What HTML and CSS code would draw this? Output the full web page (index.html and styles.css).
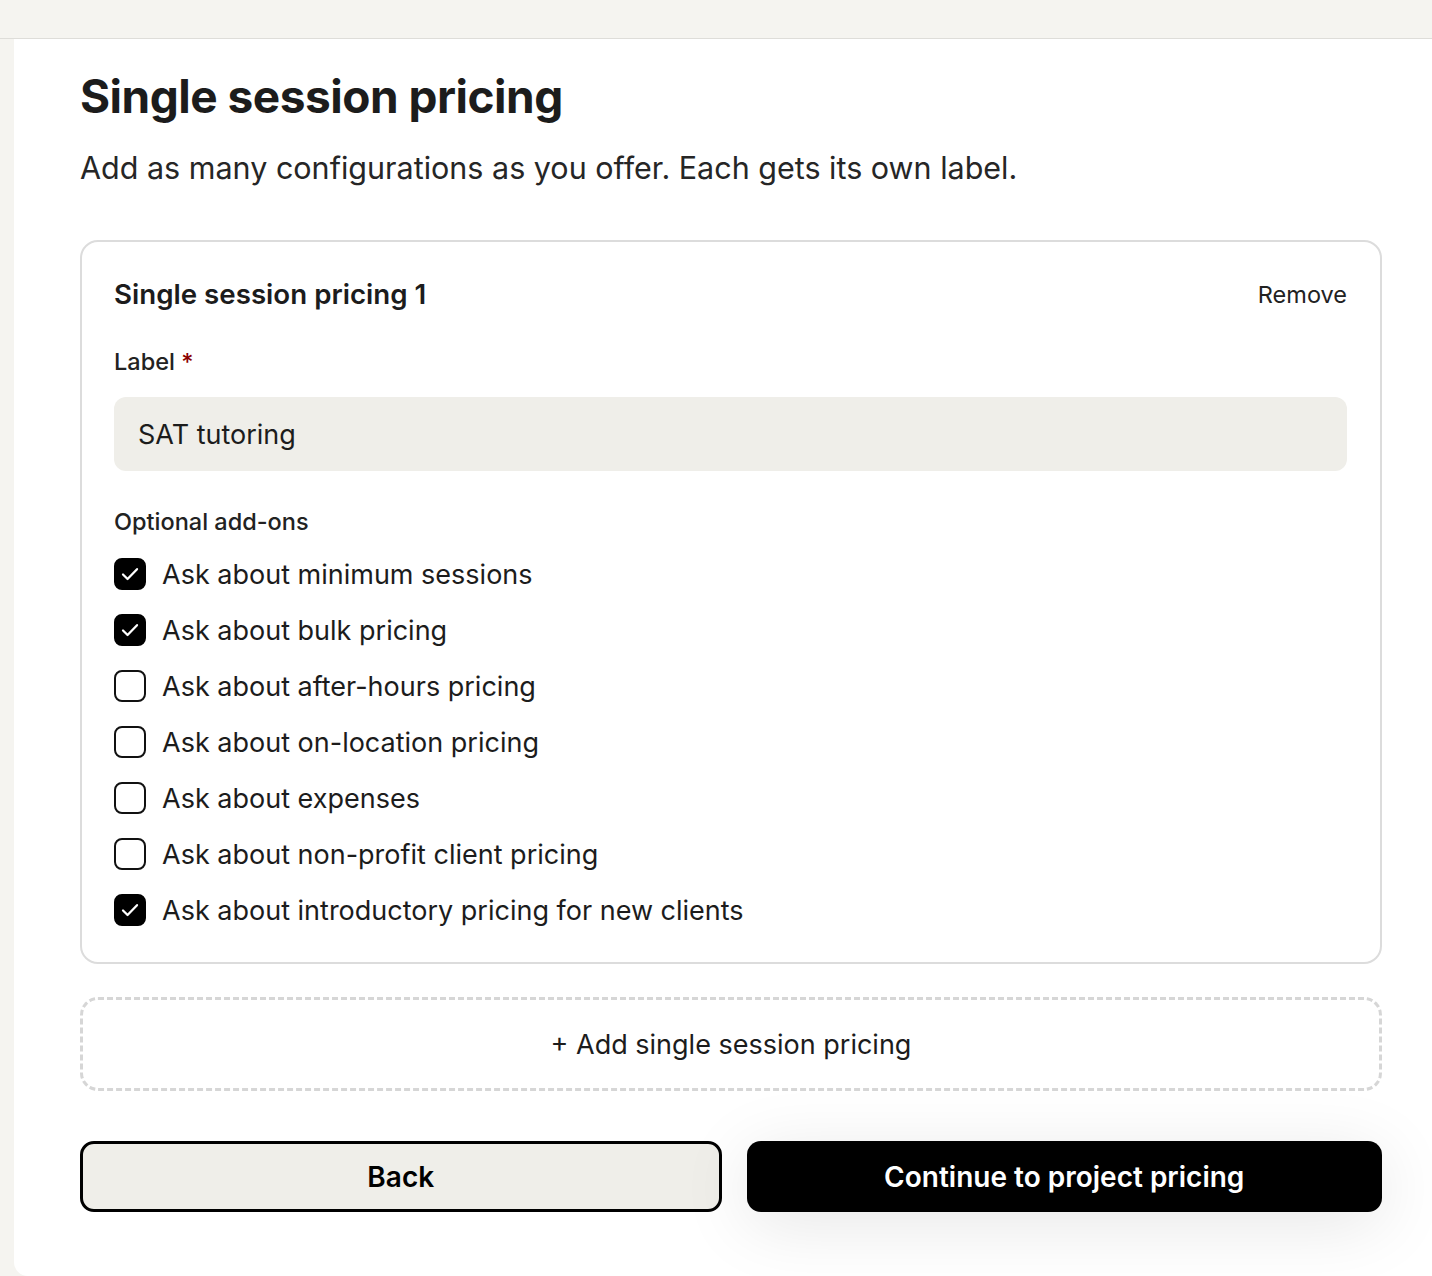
FILE: index.html
```html
<!DOCTYPE html>
<html lang="en">
<head>
  <meta charset="UTF-8" />
  <meta name="viewport" content="width=device-width, initial-scale=1.0"/>
  <title>Single session pricing</title>
  <link rel="stylesheet" href="styles.css">
</head>
<body>
  <div class="topbar"></div>
  <div class="page">
    <div class="panel">
      <h1 class="heading">Single session pricing</h1>
      <p class="intro">Add as many configurations as you offer. Each gets its own label.</p>

      <div class="card">
        <div class="card-head">
          <div class="card-title">Single session pricing 1</div>
          <button class="remove">Remove</button>
        </div>

        <label class="field-label" for="label1">Label <span class="req">*</span></label>
        <input class="field" id="label1" type="text" value="SAT tutoring">

        <div class="field-label addons-label">Optional add-ons</div>
        <div class="addons">
          <label class="addon"><span class="box checked"><svg viewBox="0 0 32 32"><path d="M8 16.5l5.2 5.2L24 10.5" /></svg></span>Ask about minimum sessions</label>
          <label class="addon"><span class="box checked"><svg viewBox="0 0 32 32"><path d="M8 16.5l5.2 5.2L24 10.5" /></svg></span>Ask about bulk pricing</label>
          <label class="addon"><span class="box"></span>Ask about after-hours pricing</label>
          <label class="addon"><span class="box"></span>Ask about on-location pricing</label>
          <label class="addon"><span class="box"></span>Ask about expenses</label>
          <label class="addon"><span class="box"></span>Ask about non-profit client pricing</label>
          <label class="addon"><span class="box checked"><svg viewBox="0 0 32 32"><path d="M8 16.5l5.2 5.2L24 10.5" /></svg></span>Ask about introductory pricing for new clients</label>
        </div>
      </div>

      <button class="add">+ Add single session pricing</button>

      <div class="actions">
        <button class="back">Back</button>
        <button class="continue">Continue to project pricing</button>
      </div>
    </div>
  </div>
</body>
</html>
```

FILE: styles.css
```css
* {
  box-sizing: border-box;
}

body {
  margin: 0;
  background-color: #f5f4f0;
  font-family: Inter, "Noto Sans", sans-serif;
  color: #1c1c1c;
}

.topbar {
  height: 39px;
  border-bottom: 1px solid #deddd9;
}

.page {
  padding-left: 14px;
}

.panel {
  background-color: white;
  border-bottom-left-radius: 14px;
  padding: 29px 50px 64px 66px;
  min-height: 1237px;
}

.heading {
  margin: 0;
  font-size: 46px;
  font-weight: 700;
  letter-spacing: -0.5px;
  line-height: 56px;
}

.intro {
  margin: 24px 0 0;
  font-size: 30.5px;
  line-height: 40px;
  color: #262626;
}

.card {
  margin-top: 52px;
  border: 2px solid #dcdcdc;
  border-radius: 18px;
  padding: 32px 33px 24px 32px;
}

.card-head {
  display: flex;
  justify-content: space-between;
  align-items: center;
  height: 40px;
}

.card-title {
  font-size: 27.7px;
  font-weight: 600;
}

.remove {
  border: none;
  background: none;
  padding: 0;
  font-family: inherit;
  font-size: 23.5px;
  color: #222;
}

.field-label {
  display: block;
  margin-top: 34px;
  font-size: 23.5px;
  line-height: 28px;
  font-weight: 500;
  color: #222;
}

.req {
  color: #8b0000;
}

.field {
  display: block;
  width: 100%;
  margin-top: 21px;
  height: 74px;
  border: none;
  border-radius: 12px;
  background-color: #efeee9;
  padding: 0 24px;
  font-family: inherit;
  font-size: 27px;
  color: #1c1c1c;
}

.addons-label {
  margin-top: 37px;
}

.addons {
  margin-top: 10px;
  display: flex;
  flex-direction: column;
}

.addon {
  display: flex;
  align-items: center;
  gap: 16px;
  height: 56px;
  font-size: 27px;
  color: #1c1c1c;
}

.box {
  width: 32px;
  height: 32px;
  border: 2px solid #111;
  border-radius: 8px;
  flex-shrink: 0;
}

.box.checked {
  background-color: black;
  border-color: black;
}

.box svg {
  display: block;
  width: 28px;
  height: 28px;
  fill: none;
  stroke: white;
  stroke-width: 2.6;
  stroke-linecap: round;
  stroke-linejoin: round;
}

.add {
  display: block;
  width: 100%;
  margin-top: 33px;
  height: 94px;
  border: 3px dashed #d6d6d6;
  border-radius: 18px;
  background: white;
  font-family: inherit;
  font-size: 27px;
  color: #1c1c1c;
}

.actions {
  display: flex;
  gap: 25px;
  margin-top: 50px;
}

.actions button {
  flex: 1;
  height: 71px;
  border-radius: 14px;
  font-family: inherit;
  font-size: 28px;
  font-weight: 600;
}

.back {
  border: 3px solid black;
  background-color: #efeee9;
  color: black;
}

.continue {
  border: none;
  background-color: black;
  color: white;
  box-shadow: 0 12px 70px rgba(0, 0, 0, 0.1);
}
```
